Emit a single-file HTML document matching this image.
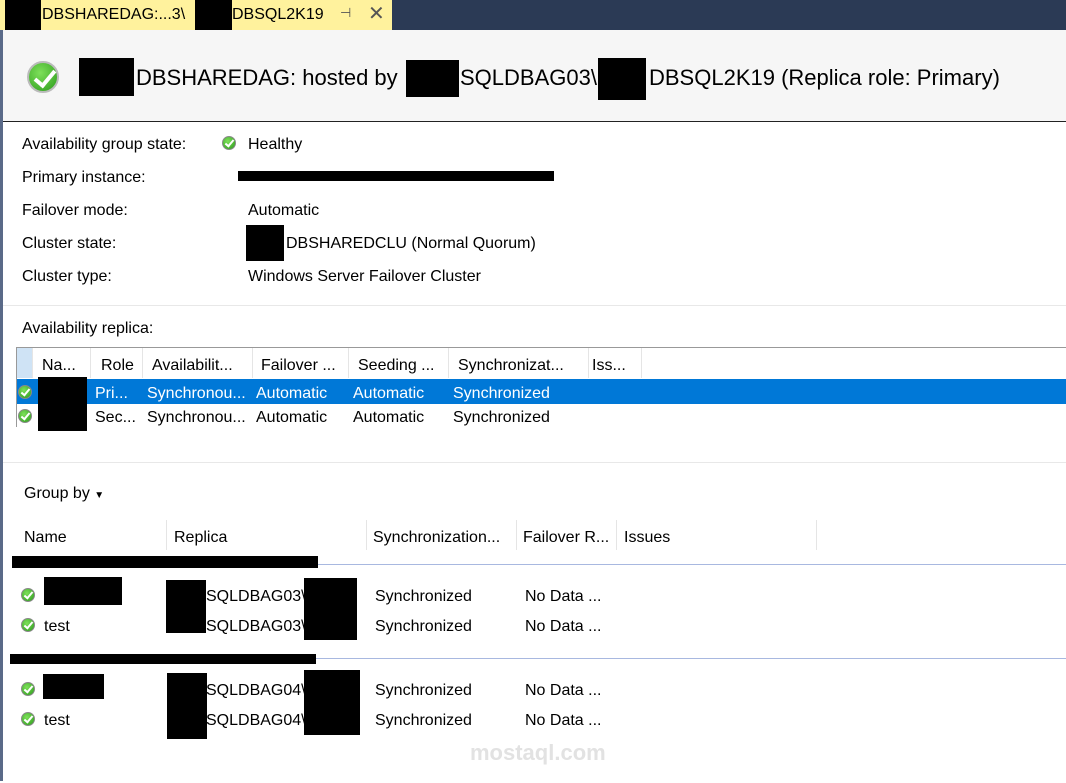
<!DOCTYPE html>
<html><head><style>
*{margin:0;padding:0;box-sizing:border-box}
body{width:1066px;height:781px;overflow:hidden;background:#fff;font-family:"Liberation Sans",sans-serif;position:relative;color:#000}
.a{position:absolute;white-space:nowrap}
.b{position:absolute;background:#000}
.t{font-size:16px}
.ck{position:absolute;width:14px;height:14px;border-radius:50%;background:radial-gradient(circle at 40% 35%,#7ee05a,#2a9a1a);border:1px solid #888}
.ck:after{content:"";position:absolute;left:4px;top:1px;width:3px;height:7px;border:solid #fff;border-width:0 2px 2px 0;transform:rotate(40deg)}
.big:after{left:10px;top:3px;width:8px;height:17px;border-width:0 4px 4px 0}
.hd{position:absolute;top:0;height:30px;border-right:1px solid #e5e5e5}
.d{position:absolute;left:0;top:2px;width:1066px;height:781px}
</style></head><body>
<div class="a" style="left:0;top:0;width:1066px;height:30px;background:#2b3a55"></div>
<div class="a" style="left:0;top:0;width:392px;height:30px;background:#fff29d"></div>
<div class="a t" style="left:42px;top:6px">DBSHAREDAG:...3\</div>
<div class="a t" style="left:232px;top:6px">DBSQL2K19</div>
<div class="a" style="left:340px;top:5px;font-size:13px;color:#555">⊣</div>
<div class="a" style="left:368px;top:1px;font-size:20px;color:#555">✕</div>
<div class="b" style="left:5px;top:0;width:36px;height:44px"></div>
<div class="b" style="left:195px;top:0;width:37px;height:33px"></div>
<div class="a" style="left:0;top:30px;width:1066px;height:91px;background:#f6f6f6"></div>
<div class="a" style="left:0;top:30px;width:3px;height:751px;background:#5a6a88"></div>
<div class="ck big" style="left:27px;top:61px;width:32px;height:32px;border:2px solid #bbb"></div>
<div class="a" style="left:136px;top:65px;font-size:22px">DBSHAREDAG: hosted by</div>
<div class="a" style="left:460px;top:65px;font-size:22px">SQLDBAG03\</div>
<div class="a" style="left:649px;top:65px;font-size:22px">DBSQL2K19 (Replica role: Primary)</div>
<div class="b" style="left:79px;top:58px;width:55px;height:38px"></div>
<div class="b" style="left:406px;top:60px;width:53px;height:37px"></div>
<div class="b" style="left:598px;top:58px;width:48px;height:42px"></div>
<div class="a" style="left:3px;top:121px;width:1063px;height:1px;background:#222"></div>
<div class="d">
<div class="a t" style="left:22px;top:134px">Availability group state:</div>
<div class="ck" style="left:222px;top:134px"></div>
<div class="a t" style="left:248px;top:134px">Healthy</div>
<div class="a t" style="left:22px;top:167px">Primary instance:</div>
<div class="a t" style="left:22px;top:200px">Failover mode:</div>
<div class="a t" style="left:248px;top:200px">Automatic</div>
<div class="a t" style="left:22px;top:233px">Cluster state:</div>
<div class="a t" style="left:286px;top:233px">DBSHAREDCLU (Normal Quorum)</div>
<div class="a t" style="left:22px;top:266px">Cluster type:</div>
<div class="a t" style="left:248px;top:266px">Windows Server Failover Cluster</div>
<div class="a t" style="left:22px;top:318px">Availability replica:</div>
</div>
<div class="b" style="left:238px;top:171px;width:316px;height:10px"></div>
<div class="b" style="left:246px;top:225px;width:38px;height:36px"></div>
<div class="a" style="left:3px;top:305px;width:1063px;height:1px;background:#e8e8e8"></div>
<div class="a" style="left:16px;top:347px;width:1050px;height:1px;background:#999"></div>
<div class="a" style="left:16px;top:347px;width:1px;height:80px;background:#999"></div>
<div class="a" style="left:17px;top:348px;width:1049px;height:30px">
<div class="hd" style="left:0;width:16px;background:#cfe3f5"></div>
<div class="hd" style="left:16px;width:58px"></div><div class="hd" style="left:74px;width:52px"></div><div class="hd" style="left:126px;width:110px"></div><div class="hd" style="left:236px;width:96px"></div><div class="hd" style="left:332px;width:100px"></div><div class="hd" style="left:432px;width:140px"></div><div class="hd" style="left:572px;width:53px"></div>
</div>
<div class="a" style="left:17px;top:379px;width:1049px;height:25px;background:#0078d7"></div>
<div class="d">
<div class="a t" style="left:42px;top:355px">Na...</div><div class="a t" style="left:101px;top:355px">Role</div><div class="a t" style="left:152px;top:355px">Availabilit...</div><div class="a t" style="left:261px;top:355px">Failover ...</div><div class="a t" style="left:358px;top:355px">Seeding ...</div><div class="a t" style="left:458px;top:355px">Synchronizat...</div><div class="a t" style="left:592px;top:355px">Iss...</div>
<div style="color:#fff"><div class="a t" style="left:95px;top:383px">Pri...</div><div class="a t" style="left:147px;top:383px">Synchronou...</div><div class="a t" style="left:256px;top:383px">Automatic</div><div class="a t" style="left:353px;top:383px">Automatic</div><div class="a t" style="left:453px;top:383px">Synchronized</div></div>
<div class="a t" style="left:95px;top:407px">Sec...</div><div class="a t" style="left:147px;top:407px">Synchronou...</div><div class="a t" style="left:256px;top:407px">Automatic</div><div class="a t" style="left:353px;top:407px">Automatic</div><div class="a t" style="left:453px;top:407px">Synchronized</div>
<div class="a t" style="left:24px;top:483px">Group by <span style="font-size:10px">▼</span></div>
<div class="a t" style="left:24px;top:527px">Name</div><div class="a t" style="left:174px;top:527px">Replica</div><div class="a t" style="left:373px;top:527px">Synchronization...</div><div class="a t" style="left:523px;top:527px">Failover R...</div><div class="a t" style="left:624px;top:527px">Issues</div>
<div class="a t" style="left:44px;top:616px">test</div>
<div class="a t" style="left:44px;top:710px">test</div>
<div class="a t" style="left:206px;top:586px">SQLDBAG03\</div><div class="a t" style="left:206px;top:616px">SQLDBAG03\</div>
<div class="a t" style="left:206px;top:680px">SQLDBAG04\</div><div class="a t" style="left:206px;top:710px">SQLDBAG04\</div>
<div class="a t" style="left:375px;top:586px">Synchronized</div><div class="a t" style="left:375px;top:616px">Synchronized</div><div class="a t" style="left:375px;top:680px">Synchronized</div><div class="a t" style="left:375px;top:710px">Synchronized</div>
<div class="a t" style="left:525px;top:586px">No Data ...</div><div class="a t" style="left:525px;top:616px">No Data ...</div><div class="a t" style="left:525px;top:680px">No Data ...</div><div class="a t" style="left:525px;top:710px">No Data ...</div>
</div>
<div class="ck" style="left:18px;top:385px"></div><div class="ck" style="left:18px;top:409px"></div>
<div class="b" style="left:38px;top:377px;width:49px;height:54px"></div>
<div class="a" style="left:3px;top:462px;width:1063px;height:1px;background:#e8e8e8"></div>
<div class="a" style="left:17px;top:520px;width:800px;height:30px">
<div class="hd" style="left:0;width:150px"></div><div class="hd" style="left:150px;width:200px"></div><div class="hd" style="left:350px;width:150px"></div><div class="hd" style="left:500px;width:100px"></div><div class="hd" style="left:600px;width:200px"></div></div>
<div class="a" style="left:266px;top:564px;width:800px;height:1px;background:#a8b8e0"></div>
<div class="b" style="left:12px;top:556px;width:306px;height:12px"></div>
<div class="a" style="left:266px;top:658px;width:800px;height:1px;background:#a8b8e0"></div>
<div class="b" style="left:10px;top:654px;width:306px;height:10px"></div>
<div class="ck" style="left:21px;top:588px"></div><div class="ck" style="left:21px;top:618px"></div><div class="ck" style="left:21px;top:682px"></div><div class="ck" style="left:21px;top:712px"></div>
<div class="b" style="left:44px;top:577px;width:78px;height:28px"></div>
<div class="b" style="left:43px;top:674px;width:61px;height:25px"></div>
<div class="b" style="left:166px;top:580px;width:40px;height:53px"></div>
<div class="b" style="left:167px;top:673px;width:40px;height:66px"></div>
<div class="b" style="left:304px;top:578px;width:53px;height:62px"></div>
<div class="b" style="left:304px;top:670px;width:56px;height:65px"></div>
<div class="a" style="left:470px;top:740px;font-size:22px;font-weight:bold;color:#e2e2e2">mostaql.com</div>
</body></html>
